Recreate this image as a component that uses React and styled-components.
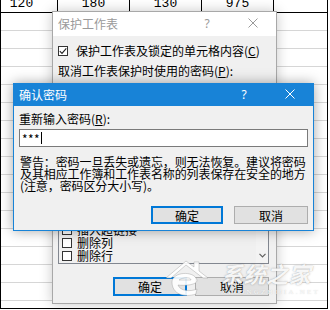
import styled, { createGlobalStyle } from 'styled-components'

const GlobalStyle = createGlobalStyle`
    html, body {
        margin: 0;
        padding: 0;
        background: #ffffff;
    }
    body {
        width: 330px;
        height: 310px;
        overflow: hidden;
        font-family: "Noto Sans CJK SC", "Noto Sans", sans-serif;
        color: #000000;
    }
`

const Desktop = styled.div`
    position: relative;
    width: 330px;
    height: 310px;
    overflow: hidden;
    background: #ffffff;
`

const Sheet = styled.div`
    box-sizing: border-box;
    width: 328px;
    height: 309px;
    border-left: 1px solid #000000;
    border-right: 1px solid #000000;
    border-bottom: 1px solid #000000;
    overflow: hidden;
`

const HeaderRow = styled.div`
    display: flex;
    height: 12px;
    border-bottom: 1px solid #000000;
    overflow: hidden;
`

const HeaderCell = styled.div`
    flex: 0 0 72px;
    box-sizing: border-box;
    border-right: 1px solid #000000;
    text-align: center;
    font-family: "Liberation Mono", monospace;
    font-size: 13px;
    line-height: 8px;

    &:first-child {
        margin-left: -15px;
    }
`

const GridRow = styled.div`
    height: 17px;
    border-bottom: 1px solid #d6d6d6;
`

const Window = styled.div`
    position: absolute;
    left: ${p => p.$x}px;
    top: ${p => p.$y}px;
    width: ${p => p.$w}px;
    height: ${p => p.$h}px;
    box-sizing: border-box;
    display: flex;
    flex-direction: column;
    background: #f0f0f0;
    border: 1px solid ${p => (p.$active ? '#1883d7' : '#a8a8a8')};
    box-shadow: 0 0 12px rgba(0, 0, 0, ${p => (p.$active ? 0.35 : 0.22)});
`

const TitleBar = styled.div`
    flex: 0 0 ${p => p.$h}px;
    display: flex;
    align-items: center;
    padding-left: 5px;
    padding-bottom: 2px;
    box-sizing: border-box;
    background: ${p => (p.$active ? '#1883d7' : '#ffffff')};
    color: ${p => (p.$active ? '#ffffff' : '#9a9a9a')};
    font-size: 12px;
`

const TitleText = styled.span`
    flex: 1;
`

const CaptionButton = styled.div`
    width: 46px;
    display: flex;
    align-items: center;
    justify-content: center;
    font-size: 12px;
    font-family: "Noto Sans", sans-serif;
`

const Body = styled.div`
    flex: 1;
    display: flex;
    flex-direction: column;
    padding: ${p => p.$pad};
`

const Line = styled.div`
    display: flex;
    align-items: center;
    gap: ${p => p.$gap || 0}px;
    height: 14px;
    font-size: 12px;
    line-height: 14px;
    white-space: nowrap;
    margin-top: ${p => p.$mt || 0}px;
`

const Key = styled.span`
    text-decoration: underline;
    text-underline-offset: 1px;
`

const Box = styled.span`
    flex: 0 0 auto;
    box-sizing: border-box;
    width: 10px;
    height: 10px;
    border: 1px solid #333333;
    background: #ffffff;
    display: flex;
    align-items: center;
    justify-content: center;
`

const ListBox = styled.div`
    margin-top: auto;
    height: 120px;
    box-sizing: border-box;
    border: 1px solid #828790;
    background: #f0f0f0;
    display: flex;
`

const ListItems = styled.div`
    flex: 1;
    display: flex;
    flex-direction: column;
    justify-content: flex-end;
    overflow: hidden;
    padding: 0 0 1px 3px;
`

const ListItem = styled.div`
    flex: 0 0 13px;
    display: flex;
    align-items: center;
    gap: 5px;
    font-size: 12px;
    line-height: 13px;
    white-space: nowrap;
`

const ScrollBar = styled.div`
    width: 12px;
    background: #f3f3f3;
    display: flex;
    flex-direction: column;
    justify-content: flex-end;
    align-items: center;
    padding-bottom: 5px;
`

const ButtonRow = styled.div`
    display: flex;
    justify-content: flex-end;
    gap: ${p => p.$gap}px;
    margin-top: ${p => (p.$mt ? `${p.$mt}px` : 'auto')};
`

const Button = styled.div`
    box-sizing: border-box;
    width: ${p => p.$w}px;
    height: ${p => p.$h}px;
    display: flex;
    align-items: center;
    justify-content: center;
    background: #e1e1e1;
    border: ${p => (p.$primary ? '2px solid #0078d7' : '1px solid #adadad')};
    font-size: 12px;
`

const PasswordInput = styled.div`
    margin-top: 3px;
    height: 18px;
    box-sizing: border-box;
    border: 1px solid #7a7a7a;
    background: #ffffff;
    display: flex;
    align-items: center;
    padding-left: 2px;
    font-size: 12px;
    letter-spacing: 0.4px;
`

const Caret = styled.span`
    width: 1px;
    height: 12px;
    background: #000000;
    margin-left: 1px;
`

const Warning = styled.div`
    margin-top: 9px;
    padding-left: 1px;
    font-size: 12px;
    line-height: 12px;
    letter-spacing: -0.1px;
    white-space: nowrap;
`

const Watermark = styled.div`
    position: absolute;
    left: 163px;
    top: 258px;
    display: flex;
    align-items: flex-start;
    gap: 6px;
    pointer-events: none;
`

const MarkText = styled.div`
    display: flex;
    flex-direction: column;
    padding-top: 2px;
`

const MarkTitle = styled.div`
    font-size: 22px;
    line-height: 27px;
    font-style: italic;
    font-weight: 700;
    letter-spacing: 0.5px;
    color: rgba(255, 255, 255, 0.92);
    text-shadow: 0 0 1px rgba(110, 110, 110, 0.55), 0 0 3px rgba(0, 0, 0, 0.12);
`

const MarkSub = styled.div`
    font-family: "Liberation Serif", serif;
    font-size: 7px;
    line-height: 11px;
    letter-spacing: 2.2px;
    color: rgba(255, 255, 255, 0.9);
    text-shadow: 0 0 1px rgba(120, 120, 120, 0.4);
`

const CloseIcon = ({ color }) => (
    <svg width="10" height="10" viewBox="0 0 10 10">
        <path d="M0.5 0.5 L9.5 9.5 M9.5 0.5 L0.5 9.5" stroke={color} strokeWidth="1" fill="none" />
    </svg>
)

const Check = () => (
    <svg width="8" height="8" viewBox="0 0 8 8">
        <path d="M0.8 4.2 L3 6.4 L7.3 1.4" stroke="#222" strokeWidth="1.1" fill="none" />
    </svg>
)

const Chevron = () => (
    <svg width="7" height="5" viewBox="0 0 7 5">
        <path d="M0.5 0.8 L3.5 3.8 L6.5 0.8" stroke="#606060" strokeWidth="1.2" fill="none" />
    </svg>
)

const Logo = () => (
    <svg width="52" height="42" viewBox="0 0 50 42">
        <g fill="rgba(255,255,255,0.9)" stroke="rgba(140,140,140,0.45)" strokeWidth="0.8">
            <path d="M2 20 L22 3 L30 9 L30 4 L35 4 L35 13 L44 20 L39 20 L22 7 L7 20 Z" />
            <path d="M8 24 C8 14 30 12 33 22 C34 27 20 28 14 27 C16 33 26 34 33 31 L32 36 C20 40 8 36 8 24 Z M15 22 C19 19 27 19 27 22 Z" />
        </g>
    </svg>
)

const headers = ['120', '180', '130', '975', '']
const rows = Array.from({ length: 16 })
const listItems = ['插入超链接', '删除列', '删除行']

export default function App() {
    return (
        <Desktop>
            <GlobalStyle />
            <Sheet>
                <HeaderRow>
                    {headers.map((h, i) => (
                        <HeaderCell key={i}>{h}</HeaderCell>
                    ))}
                </HeaderRow>
                {rows.map((_, i) => (
                    <GridRow key={i} />
                ))}
            </Sheet>

            <Window $x={52} $y={11} $w={225} $h={293}>
                <TitleBar $h={24}>
                    <TitleText>保护工作表</TitleText>
                    <CaptionButton>?</CaptionButton>
                    <CaptionButton>
                        <CloseIcon color="#9a9a9a" />
                    </CaptionButton>
                </TitleBar>
                <Body $pad="8px 7px 7px 5px">
                    <Line $gap={8}>
                        <Box>
                            <Check />
                        </Box>
                        <span>保护工作表及锁定的单元格内容(<Key>C</Key>)</span>
                    </Line>
                    <Line $mt={6}>
                        取消工作表保护时使用的密码(<Key>P</Key>):
                    </Line>
                    <ListBox>
                        <ListItems>
                            {listItems.map(item => (
                                <ListItem key={item}>
                                    <Box />
                                    {item}
                                </ListItem>
                            ))}
                        </ListItems>
                        <ScrollBar>
                            <Chevron />
                        </ScrollBar>
                    </ListBox>
                    <ButtonRow $gap={8} $mt={13}>
                        <Button $primary $w={74} $h={19}>确定</Button>
                        <Button $w={74} $h={19}>取消</Button>
                    </ButtonRow>
                </Body>
            </Window>

            <Window $active $x={13} $y={83} $w={301} $h={148}>
                <TitleBar $active $h={22}>
                    <TitleText>确认密码</TitleText>
                    <CaptionButton>?</CaptionButton>
                    <CaptionButton>
                        <CloseIcon color="#ffffff" />
                    </CaptionButton>
                </TitleBar>
                <Body $pad="6px 5px 6px 5px">
                    <Line>
                        重新输入密码(<Key>R</Key>):
                    </Line>
                    <PasswordInput>
                        ***
                        <Caret />
                    </PasswordInput>
                    <Warning>
                        警告：密码一旦丢失或遗忘，则无法恢复。建议将密码
                        <br />
                        及其相应工作簿和工作表名称的列表保存在安全的地方
                        <br />
                        (注意，密码区分大小写)。
                    </Warning>
                    <ButtonRow $gap={11}>
                        <Button $primary $w={72} $h={18}>确定</Button>
                        <Button $w={74} $h={18}>取消</Button>
                    </ButtonRow>
                </Body>
            </Window>

            <Watermark>
                <Logo />
                <MarkText>
                    <MarkTitle>系统之家</MarkTitle>
                    <MarkSub>XITONGZHIJIA.NET</MarkSub>
                </MarkText>
            </Watermark>
        </Desktop>
    )
}
